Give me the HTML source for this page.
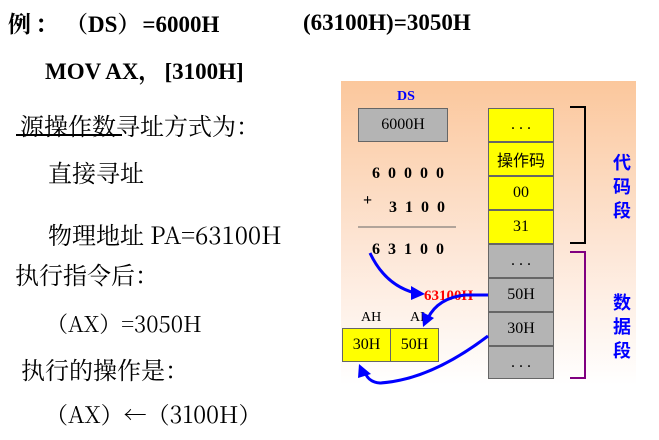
<!DOCTYPE html>
<html><head><meta charset="utf-8"><style>
body{margin:0;width:659px;height:440px;background:#fff;position:relative;overflow:hidden;font-family:"Noto Serif CJK SC","Liberation Serif",serif;color:#000}
.a{position:absolute;white-space:nowrap;line-height:1}
.b{font-weight:bold;font-family:"Liberation Serif","Noto Serif CJK SC",serif}
.p{font-family:"Noto Serif CJK SC",serif;display:inline-block;text-align:center}
#panel{position:absolute;left:341px;top:81px;width:295px;height:304px;background:linear-gradient(#fbc79c,#fde6d6 55%,#fff)}
.box{position:absolute;box-sizing:border-box;border:1px solid #666;display:flex;align-items:center;justify-content:center;font-size:16px;font-family:"Liberation Serif","Noto Serif CJK SC",serif}
.y{background:#ffff00}.g{background:#b4b4b4}
.blue{color:#0000ff}
.d{font-family:"Liberation Serif",serif;font-weight:bold}
</style></head><body>
<div class="a b" style="left:8px;top:11px;font-size:23px">例<span class="p" style="width:34px;text-align:left;padding-left:4px;box-sizing:border-box">：</span><span class="p" style="width:23px;text-align:right">（</span>DS<span class="p" style="width:25px;text-align:left">）</span>=6000H</div>
<div class="a b" style="left:303px;top:11px;font-size:23px">(63100H)=3050H</div>
<div class="a b" style="left:45px;top:58px;font-size:23px">MOV AX<span class="p" style="width:26px;text-align:left">，</span>[3100H]</div>
<div class="a" style="left:20px;top:113px;font-size:24px">源操作数寻址方式为：</div>
<div class="a" style="left:16px;top:134px;width:106px;height:1.5px;background:#000"></div>
<div class="a" style="left:48px;top:160px;font-size:24px">直接寻址</div>
<div class="a" style="left:48px;top:222px;font-size:24px">物理地址 PA=63100H</div>
<div class="a" style="left:15px;top:262px;font-size:24px">执行指令后：</div>
<div class="a" style="left:46px;top:313px;font-size:22px">（AX）=3050H</div>
<div class="a" style="left:21px;top:357px;font-size:24px">执行的操作是：</div>
<div class="a" style="left:45px;top:402px;font-size:23px">（AX）←（3100H）</div>

<div id="panel"></div>
<div class="a d blue" style="left:397px;top:90px;font-size:14px">DS</div>
<div class="box g" style="left:358px;top:108px;width:90px;height:34px">6000H</div>
<div class="a d" style="left:372px;top:166px;font-size:16px;letter-spacing:8px">60000</div>
<div class="a d" style="left:363px;top:193px;font-size:16px">+</div>
<div class="a d" style="left:389px;top:200px;font-size:16px;letter-spacing:8px">3100</div>
<div class="a d" style="left:372px;top:242px;font-size:16px;letter-spacing:8px">63100</div>

<div class="box y" style="left:488px;top:108px;width:66px;height:34px">. . .</div>
<div class="box y" style="left:488px;top:142px;width:66px;height:34px;font-family:'Noto Sans CJK SC',sans-serif">操作码</div>
<div class="box y" style="left:488px;top:176px;width:66px;height:34px">00</div>
<div class="box y" style="left:488px;top:210px;width:66px;height:34px">31</div>
<div class="box g" style="left:488px;top:244px;width:66px;height:34px">. . .</div>
<div class="box g" style="left:488px;top:278px;width:66px;height:34px">50H</div>
<div class="box g" style="left:488px;top:312px;width:66px;height:34px">30H</div>
<div class="box g" style="left:488px;top:346px;width:66px;height:33px">. . .</div>

<div class="a" style="left:361px;top:311px;font-size:14px;font-family:'Liberation Serif'">AH</div>
<div class="a" style="left:410px;top:311px;font-size:14px;font-family:'Liberation Serif'">AL</div>
<div class="box y" style="left:342px;top:328px;width:49px;height:34px">30H</div>
<div class="box y" style="left:390px;top:328px;width:49px;height:34px">50H</div>

<div class="a blue" style="left:613px;top:150px;font-size:18px;line-height:24px;width:20px;font-family:'Noto Sans CJK SC',sans-serif;font-weight:bold">代<br>码<br>段</div>
<div class="a blue" style="left:613px;top:290px;font-size:18px;line-height:24px;width:20px;font-family:'Noto Sans CJK SC',sans-serif;font-weight:bold">数<br>据<br>段</div>
<div class="a d" style="left:424px;top:289px;font-size:15px;color:#ff0000">63100H</div>

<svg class="a" style="left:0;top:0" width="659" height="440">
<line x1="358" y1="227" x2="456" y2="227" stroke="#666" stroke-width="1"/>
<polyline points="570,107 585,107 585,243 570,243" fill="none" stroke="#000" stroke-width="2"/>
<polyline points="570,252 585,252 585,378 570,378" fill="none" stroke="#800080" stroke-width="2"/>
<path d="M370,253 Q385,285 415,293" fill="none" stroke="#0000ff" stroke-width="3"/>
<polygon points="425,294 411,286 411,300" fill="#0000ff"/>
<path d="M488,295 L465,295 Q438,298 428,318" fill="none" stroke="#0000ff" stroke-width="3"/>
<polygon points="423,327 422,312 434,318" fill="#0000ff"/>
<path d="M488,336 Q430,380 380,383 Q368,382 365,372" fill="none" stroke="#0000ff" stroke-width="3"/>
<polygon points="359,364 358,378 371,374" fill="#0000ff"/>
</svg>
</body></html>
